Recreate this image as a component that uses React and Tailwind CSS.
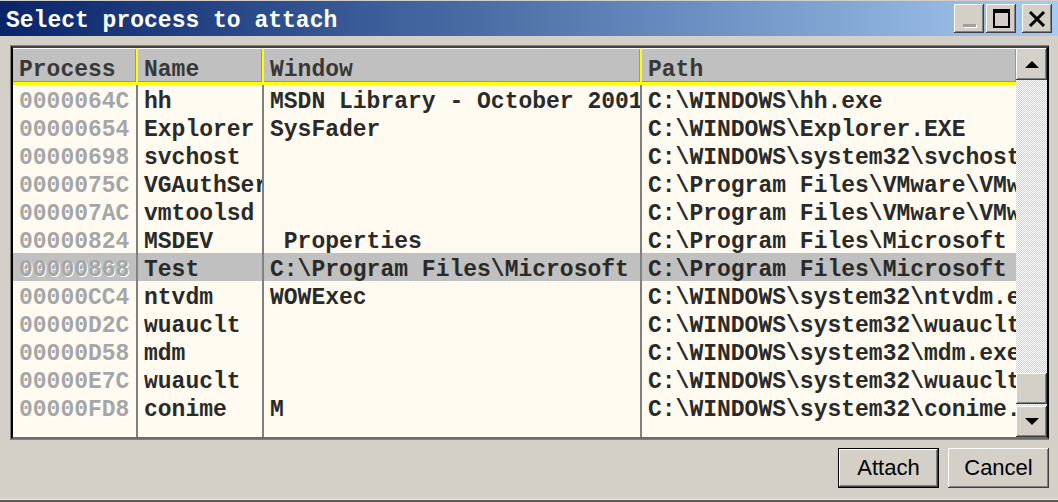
import React from "react";

const rows = [
  ["0000064C", "hh", "MSDN Library - October 2001", "C:\\WINDOWS\\hh.exe"],
  ["00000654", "Explorer", "SysFader", "C:\\WINDOWS\\Explorer.EXE"],
  ["00000698", "svchost", "", "C:\\WINDOWS\\system32\\svchost.exe"],
  ["0000075C", "VGAuthService", "", "C:\\Program Files\\VMware\\VMware Tools\\VMware VGAuth\\VGAuthService.exe"],
  ["000007AC", "vmtoolsd", "", "C:\\Program Files\\VMware\\VMware Tools\\vmtoolsd.exe"],
  ["00000824", "MSDEV", " Properties", "C:\\Program Files\\Microsoft Visual Studio\\Common\\MSDev98\\Bin\\MSDEV.EXE"],
  ["00000868", "Test", "C:\\Program Files\\Microsoft Visual Studio\\MyProjects\\Test\\Debug\\Test.exe", "C:\\Program Files\\Microsoft Visual Studio\\MyProjects\\Test\\Debug\\Test.exe"],
  ["00000CC4", "ntvdm", "WOWExec", "C:\\WINDOWS\\system32\\ntvdm.exe"],
  ["00000D2C", "wuauclt", "", "C:\\WINDOWS\\system32\\wuauclt.exe"],
  ["00000D58", "mdm", "", "C:\\WINDOWS\\system32\\mdm.exe"],
  ["00000E7C", "wuauclt", "", "C:\\WINDOWS\\system32\\wuauclt.exe"],
  ["00000FD8", "conime", "M", "C:\\WINDOWS\\system32\\conime.exe"],
];

const SELECTED = 6;

const cols = [
  { title: "Process", w: "w-[125px]", sep: true },
  { title: "Name", w: "w-[126px]", sep: true },
  { title: "Window", w: "w-[378px]", sep: true },
  { title: "Path", w: "w-[374px]", sep: false },
];

const bevel =
  "shadow-[inset_-1px_-1px_0_#404040,inset_1px_1px_0_#ffffff,inset_-2px_-2px_0_#808080,inset_2px_2px_0_#d4d0c8]";

function Column({ col, idx }) {
  return (
    <div className={`${col.w} shrink-0 flex flex-col`}>
      <div
        className={`h-[37px] shrink-0 bg-[#c0c0c0] border-t border-t-white border-b-[3px] border-b-[#ffff00] shadow-[inset_-1px_-1px_0_#a09c60] ${
          col.sep ? "border-r-2 border-r-[#ffff00]" : ""
        } flex items-center pl-[6px] pt-[9px] font-['Liberation_Mono',monospace] font-bold text-[23px] text-[#383838] leading-none overflow-hidden whitespace-nowrap`}
      >
        {col.title}
      </div>
      <div
        className={`flex-1 flex flex-col ${col.sep ? "border-r-2 border-r-[#808080]" : ""}`}
      >
        {rows.map((r, i) => (
          <div
            key={i}
            className={`h-[28px] shrink-0 flex items-center pl-[6px] pt-[6px] overflow-hidden whitespace-pre font-['Liberation_Mono',monospace] font-bold text-[23px] leading-none ${
              i === SELECTED ? "bg-[#c0c0c0]" : ""
            } ${
              idx === 0
                ? "text-[#a6a6a6] [text-shadow:1px_1px_0_#ffffff]"
                : "text-[#2a2a2a]"
            }`}
          >
            {r[idx]}
          </div>
        ))}
        <div className="flex-1" />
      </div>
    </div>
  );
}

function TitleButton({ children, className = "" }) {
  return (
    <div
      className={`w-[30px] h-[29px] bg-[#d4d0c8] ${bevel} flex items-center justify-center ${className}`}
    >
      {children}
    </div>
  );
}

function Arrow({ down }) {
  return (
    <svg width="14" height="8" viewBox="0 0 14 8">
      {down ? (
        <polygon points="0,0 14,0 7,7" fill="#000" />
      ) : (
        <polygon points="0,8 14,8 7,1" fill="#000" />
      )}
    </svg>
  );
}

export default function App() {
  return (
    <div className="w-[1058px] h-[502px] bg-[#d4d0c8] flex flex-col overflow-hidden border-t border-t-[#cfcfcf]">
      {/* Title bar */}
      <div className="h-[35px] shrink-0 flex items-center bg-linear-to-r from-[#0a246a] to-[#a6caf0] pl-[6px] pr-[6px]">
        <span className="font-['Liberation_Mono',monospace] font-bold text-[23px] text-white leading-none pt-[5px]">
          Select process to attach
        </span>
        <div className="ml-auto flex items-center">
          <TitleButton className="items-end pb-[6px]">
            <div className="w-[13px] h-[3px] bg-[#a0a0a0] shadow-[1px_1px_0_#ffffff]" />
          </TitleButton>
          <TitleButton className="ml-[2px]">
            <div className="w-[17px] h-[19px] border-2 border-t-[4px] border-black" />
          </TitleButton>
          <TitleButton className="ml-[6px]">
            <svg width="18" height="16" viewBox="0 0 18 16">
              <path d="M2 1 L16 15 M16 1 L2 15" stroke="#000" strokeWidth="3" />
            </svg>
          </TitleButton>
        </div>
      </div>

      {/* Body */}
      <div className="flex-1 flex flex-col pt-[9px] pl-[10px] pr-[9px] pb-[11px]">
        <div className="h-[395px] shrink-0 border border-[#808080] border-r-0">
          <div className="h-full flex border-l-2 border-l-black border-t-2 border-t-[#404040] border-r-2 border-r-black border-b-2 border-b-[#6b6b6b] bg-[#fffbf0]">
            {cols.map((c, i) => (
              <Column key={i} col={c} idx={i} />
            ))}
            {/* Scrollbar */}
            <div className="flex-1 flex flex-col">
              <div className={`h-[32px] shrink-0 bg-[#d4d0c8] ${bevel} flex items-center justify-center`}>
                <Arrow />
              </div>
              <div className="flex-1 bg-[repeating-conic-gradient(#d4d0c8_0_25%,#ffffff_0_50%)] bg-[length:2px_2px]" />
              <div className={`h-[31px] shrink-0 bg-[#d4d0c8] ${bevel}`} />
              <div className="h-[2px] shrink-0 bg-[repeating-conic-gradient(#d4d0c8_0_25%,#ffffff_0_50%)] bg-[length:2px_2px]" />
              <div className={`h-[31px] shrink-0 bg-[#d4d0c8] ${bevel} flex items-center justify-center`}>
                <Arrow down />
              </div>
            </div>
          </div>
        </div>

        <div className="mt-[8px] flex justify-end gap-[9px]">
          <div className="w-[101px] h-[40px] border border-black">
            <div
              className={`w-full h-full bg-[#d4d0c8] ${bevel} flex items-center justify-center font-['Liberation_Sans',Arial,sans-serif] text-[22px] text-black leading-none`}
            >
              Attach
            </div>
          </div>
          <div
            className={`w-[101px] h-[40px] bg-[#d4d0c8] ${bevel} flex items-center justify-center font-['Liberation_Sans',Arial,sans-serif] text-[22px] text-black leading-none`}
          >
            Cancel
          </div>
        </div>
      </div>

      <div className="h-[3px] shrink-0 bg-[#5a5a5a] border-t border-t-[#ececec]" />
    </div>
  );
}
